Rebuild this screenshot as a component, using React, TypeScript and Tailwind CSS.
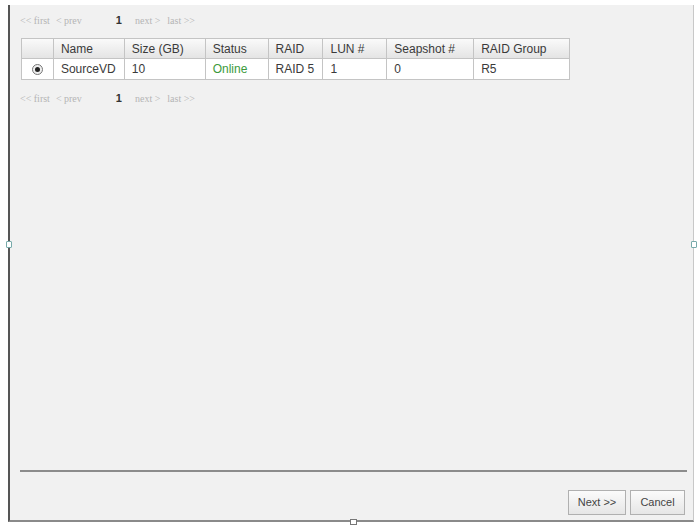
import { useState } from 'react';

const columns = ['Name', 'Size (GB)', 'Status', 'RAID', 'LUN #', 'Seapshot #', 'RAID Group'];
const widths = ['w-[71px]', 'w-[81px]', 'w-[63px]', 'w-[55px]', 'w-[64px]', 'w-[87px]', 'w-[96px]'];

function Pager() {
  return (
    <div className="flex items-center h-[12px] text-[10px] text-[#b5b5b5] font-['Liberation_Serif',serif] pl-[10px]">
      <span>&lt;&lt; first</span>
      <span className="ml-[6px]">&lt; prev</span>
      <span className="ml-[34px] text-[11px] font-bold text-[#333] font-['Liberation_Sans',sans-serif]">1</span>
      <span className="ml-[13px]">next &gt;</span>
      <span className="ml-[7px]">last &gt;&gt;</span>
    </div>
  );
}

export default function App() {
  const [selected, setSelected] = useState(true);

  return (
    <div className="w-[698px] h-[526px] bg-white pt-[5px] pl-[8px] pr-[4px] font-['Liberation_Sans',Arial,sans-serif]">
      <div className="relative h-[517px] bg-[#f1f1f1] border-l-2 border-l-[#555] border-r border-r-[#c8c8c8] border-b-2 border-b-[#8a8a8a] flex flex-col">
        <div className="pt-[9px]">
          <Pager />
        </div>

        <table className="ml-[11px] mt-[12px] border-collapse border border-[#b5b5b5] text-[12px] text-[#3a3a3a] w-[549px]">
          <thead>
            <tr className="h-[20px] bg-gradient-to-b from-[#fafafa] to-[#e3e3e3]">
              <th className="w-[32px] border border-[#c4c4c4]"></th>
              {columns.map((c, i) => (
                <th key={c} className={`${widths[i]} border border-[#c4c4c4] text-left font-normal pl-[7px]`}>
                  {c}
                </th>
              ))}
            </tr>
          </thead>
          <tbody>
            <tr className="h-[21px] bg-white">
              <td className="border border-[#c4c4c4] text-center">
                <button
                  onClick={() => setSelected(!selected)}
                  className="inline-flex items-center justify-center w-[11px] h-[11px] rounded-full border border-[#777] bg-[#eee] align-middle"
                >
                  {selected && <span className="w-[5px] h-[5px] rounded-full bg-[#222]" />}
                </button>
              </td>
              <td className="border border-[#c4c4c4] pl-[7px]">SourceVD</td>
              <td className="border border-[#c4c4c4] pl-[7px]">10</td>
              <td className="border border-[#c4c4c4] pl-[7px] text-[#3c9a3c]">Online</td>
              <td className="border border-[#c4c4c4] pl-[7px]">RAID 5</td>
              <td className="border border-[#c4c4c4] pl-[7px]">1</td>
              <td className="border border-[#c4c4c4] pl-[7px]">0</td>
              <td className="border border-[#c4c4c4] pl-[7px]">R5</td>
            </tr>
          </tbody>
        </table>

        <div className="mt-[12px]">
          <Pager />
        </div>

        <div className="flex-1" />

        <div className="ml-[10px] mr-[6px] border-t-2 border-t-[#8c8c8c]" />

        <div className="flex justify-end gap-[4px] pr-[8px] pt-[18px] pb-[5px]">
          <button className="w-[58px] h-[25px] border border-[#b0b0b0] bg-gradient-to-b from-[#fbfbfb] to-[#e6e6e6] text-[11px] text-[#444]">
            Next &gt;&gt;
          </button>
          <button className="w-[55px] h-[25px] border border-[#b0b0b0] bg-gradient-to-b from-[#fbfbfb] to-[#e6e6e6] text-[11px] text-[#444]">
            Cancel
          </button>
        </div>

        <span className="absolute left-[-4px] top-[236px] w-[6px] h-[7px] bg-white border border-[#7aa] rounded-[1px]" />
        <span className="absolute right-[-4px] top-[236px] w-[6px] h-[7px] bg-white border border-[#7aa] rounded-[1px]" />
        <span className="absolute left-[340px] bottom-[-5px] w-[7px] h-[6px] bg-white border border-[#777]" />
      </div>
    </div>
  );
}
